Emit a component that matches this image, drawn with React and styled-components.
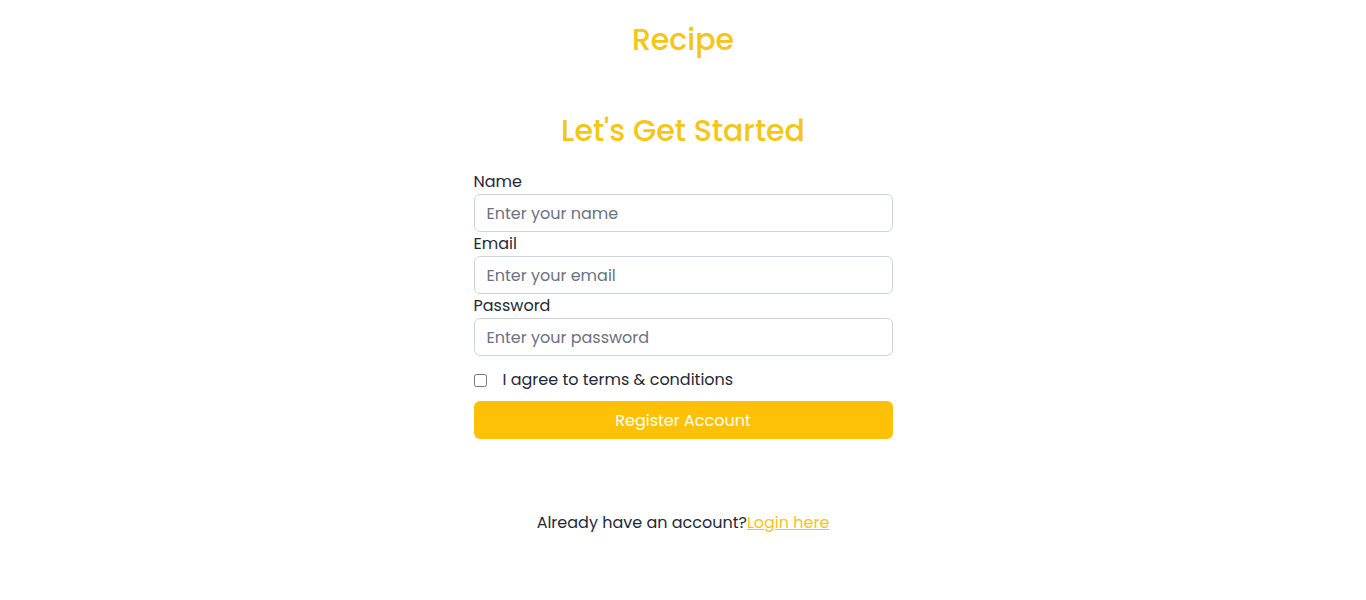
import React from "react";
import styled, { createGlobalStyle } from "styled-components";

const GlobalStyle = createGlobalStyle`
	body {
		margin: 0;
		background: #ffffff;
		font-family: "Poppins", "Open Sans", "Noto Sans", sans-serif;
		color: #1f2937;
	}
	* {
		box-sizing: border-box;
	}
`;

const Page = styled.div`
	display: flex;
	flex-direction: column;
	align-items: center;
	min-height: 600px;
`;

const Header = styled.header`
	padding-top: 22px;
`;

const Brand = styled.h1`
	margin: 0;
	font-size: 30px;
	line-height: 36px;
	font-weight: 500;
	color: #f5c518;
`;

const Main = styled.main`
	margin-top: 55px;
	display: flex;
	flex-direction: column;
	align-items: center;
`;

const Heading = styled.h2`
	margin: 0 0 21px;
	font-size: 30px;
	line-height: 36px;
	font-weight: 500;
	color: #f5c518;
`;

const Form = styled.form`
	width: 419px;
	display: flex;
	flex-direction: column;
`;

const Label = styled.label`
	display: block;
	font-size: 16px;
	line-height: 24px;
	color: #1f2937;
`;

const Input = styled.input`
	display: block;
	width: 100%;
	height: 38px;
	padding: 6px 12px;
	border: 1px solid #cbd5e1;
	border-radius: 6px;
	font-family: inherit;
	font-size: 16px;
	line-height: 24px;
	color: #1f2937;
	outline: none;

	&::placeholder {
		color: #6b7280;
	}
`;

const CheckRow = styled.label`
	display: flex;
	align-items: center;
	gap: 16px;
	margin-top: 12px;
	font-size: 16px;
	line-height: 24px;
	color: #1f2937;
`;

const Checkbox = styled.input`
	margin: 0;
	width: 13px;
	height: 13px;
`;

const Button = styled.button`
	margin-top: 9px;
	height: 38px;
	border: none;
	border-radius: 6px;
	background: #ffc107;
	color: #ffffff;
	font-family: inherit;
	font-size: 16px;
	font-weight: 400;
	cursor: pointer;
`;

const Footer = styled.p`
	margin: 72px 0 0;
	font-size: 16px;
	line-height: 24px;
	color: #1f2937;
`;

const Link = styled.a`
	color: #f5c518;
	text-decoration: underline;
	cursor: pointer;
`;

const fields = [
	{ id: "name", label: "Name", type: "text", placeholder: "Enter your name" },
	{ id: "email", label: "Email", type: "email", placeholder: "Enter your email" },
	{ id: "password", label: "Password", type: "password", placeholder: "Enter your password" },
];

const App = () => {
	return (
		<React.Fragment>
			<GlobalStyle />
			<Page>
				<Header>
					<Brand>Recipe</Brand>
				</Header>

				<Main>
					<Heading>Let's Get Started</Heading>

					<Form onSubmit={(e) => e.preventDefault()}>
						{fields.map((f) => (
							<React.Fragment key={f.id}>
								<Label htmlFor={f.id}>{f.label}</Label>
								<Input id={f.id} type={f.type} placeholder={f.placeholder} />
							</React.Fragment>
						))}

						<CheckRow>
							<Checkbox type="checkbox" />
							I agree to terms &amp; conditions
						</CheckRow>

						<Button type="submit">Register Account</Button>
					</Form>

					<Footer>
						Already have an account?<Link>Login here</Link>
					</Footer>
				</Main>
			</Page>
		</React.Fragment>
	);
};

export default App;
